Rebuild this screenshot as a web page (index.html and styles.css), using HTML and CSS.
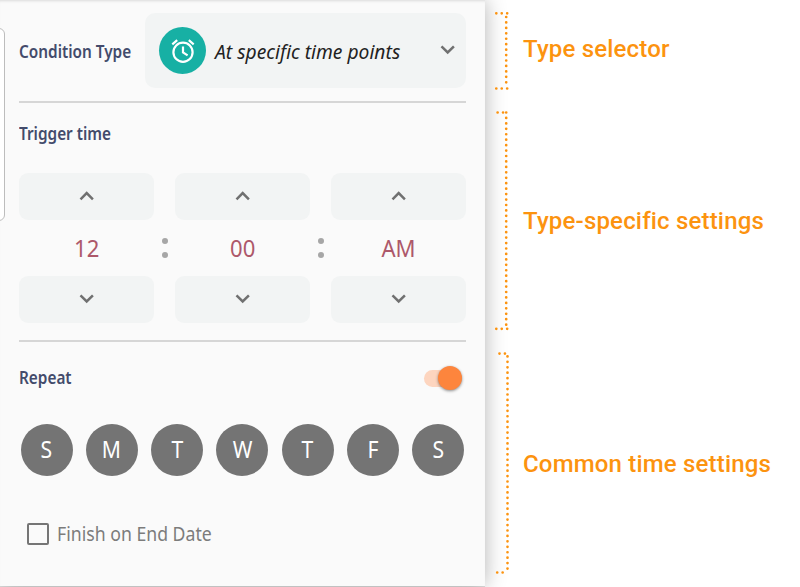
FILE: index.html
```
<!DOCTYPE html>
<html lang="en">
<head>
<meta charset="utf-8">
<title>Time condition settings</title>
<link rel="stylesheet" href="styles.css">
</head>
<body>
<svg class="defs" width="0" height="0" aria-hidden="true">
  <symbol id="up" viewBox="0 0 16 10"><path d="M1.5 8.3 7.7 2.1l6.2 6.2"/></symbol>
  <symbol id="down" viewBox="0 0 16 10"><path d="M1.5 1.3 7.7 7.5l6.2-6.2"/></symbol>
</svg>
<div class="page">
  <main class="panel">
    <div class="edge"></div>
    <section class="type-row">
      <div class="heading"><span>Condition Type</span></div>
      <div class="selector">
        <div class="alarm">
          <svg width="24" height="24" viewBox="0 0 24 24"><circle cx="12" cy="13.2" r="9.6"/><path d="M12 7.6v5.9l4.6 2.9M1.3 5.4l4.9-4.2M22.7 5.4l-4.9-4.2"/></svg>
        </div>
        <div class="choice"><span>At specific time points</span></div>
        <svg class="chevron" width="16" height="10"><use href="#down"/></svg>
      </div>
    </section>
    <section class="trigger">
      <div class="heading"><span>Trigger time</span></div>
      <div class="picker">
        <button class="step"><svg class="chevron" width="16" height="10"><use href="#up"/></svg></button>
        <i></i>
        <button class="step"><svg class="chevron" width="16" height="10"><use href="#up"/></svg></button>
        <i></i>
        <button class="step"><svg class="chevron" width="16" height="10"><use href="#up"/></svg></button>
        <div class="value"><span>12</span></div>
        <div class="colon"><b></b><b></b></div>
        <div class="value"><span>00</span></div>
        <div class="colon"><b></b><b></b></div>
        <div class="value"><span>AM</span></div>
        <button class="step"><svg class="chevron" width="16" height="10"><use href="#down"/></svg></button>
        <i></i>
        <button class="step"><svg class="chevron" width="16" height="10"><use href="#down"/></svg></button>
        <i></i>
        <button class="step"><svg class="chevron" width="16" height="10"><use href="#down"/></svg></button>
      </div>
    </section>
    <section class="repeat">
      <div class="heading"><span>Repeat</span></div>
      <div class="switch"><div class="knob"></div></div>
    </section>
    <div class="days">
      <div class="day"><span>S</span></div><div class="day"><span>M</span></div><div class="day"><span>T</span></div><div class="day"><span>W</span></div><div class="day"><span>T</span></div><div class="day"><span>F</span></div><div class="day"><span>S</span></div>
    </div>
    <div class="finish"><div class="checkbox"></div><div class="finish-label"><span>Finish on End Date</span></div></div>
  </main>
  <aside class="notes">
    <div class="note first">
      <svg width="18" height="78" viewBox="0 0 18 78"><path d="M3.3 1.3h11M13.2 5v66M3.3 76.5h11" /></svg>
      <div class="label">Type selector</div>
    </div>
    <div class="note second">
      <svg width="18" height="219" viewBox="0 0 18 219"><path d="M4.6 1.5h6M13.2 1.5v213M3.3 217.8h11"/></svg>
      <div class="label">Type-specific settings</div>
    </div>
    <div class="note third">
      <svg width="18" height="222" viewBox="0 0 18 222"><path d="M6.5 1.6h6M14.5 4.4v217M4.2 220.5h7"/></svg>
      <div class="label">Common time settings</div>
    </div>
  </aside>
</div>
</body>
</html>
```
FILE: styles.css
```
* { box-sizing: border-box; }
body { margin: 0; background: #fff; font-family: "Noto Sans", sans-serif; }
.defs { display: block; }
.page { display: flex; width: 800px; height: 587px; overflow: hidden; }
.panel {
  position: relative;
  width: 485px; height: 586px; flex: none;
  padding: 13px 19px 0;
  background: #fafafa;
  box-shadow: 0 0 20px rgba(0,0,0,.3), 0 1px 0 #e2e2e2, inset 0 3px 3px -2px rgba(0,0,0,.13);
}
.edge {
  position: absolute; left: -10px; top: 28px;
  width: 15px; height: 193px;
  border: 1px solid #bdbdbd; border-radius: 6px; background: #fff;
}
.panel span { display: inline-block; transform-origin: 0 50%; }
.heading { font-size: 17px; line-height: 24px; font-weight: 600; color: #434b6b; white-space: nowrap; }
.heading span { transform: scaleX(.902); }
.type-row { display: flex; align-items: center; height: 90px; padding-bottom: 13px; border-bottom: 2px solid #d6d6d6; }
.type-row .heading { width: 126px; padding-top: 3px; }
.selector { display: flex; align-items: center; width: 321px; height: 75px; padding: 0 10px 0 14px; border-radius: 10px; background: #f2f4f4; }
.alarm { display: flex; align-items: center; justify-content: center; width: 47px; height: 47px; border-radius: 50%; background: #17b0a4; }
.alarm svg { fill: none; stroke: #fff; stroke-width: 2.2; }
.choice { flex: 1; margin-left: 9px; padding-top: 2px; font-size: 19px; font-style: italic; color: #222; white-space: nowrap; }
.choice span { transform: scaleX(1.012); }
.chevron { fill: none; stroke: #707070; stroke-width: 2.5; display: block; }
.selector .chevron { margin-top: -1px; }
.trigger { height: 239px; padding-top: 19px; border-bottom: 2px solid #d6d6d6; }
.picker { display: grid; grid-template-columns: 135px 21px 135px 21px 135px; grid-template-rows: 47px 56px 47px; margin-top: 27px; }
.step { display: flex; align-items: center; justify-content: center; border: 0; padding: 0 0 2px; border-radius: 9px; background: #f2f4f4; }
.value { display: flex; align-items: center; justify-content: center; padding-bottom: 2px; font-size: 24px; color: #ad586a; }
.value span, .day span { transform: scaleX(.92); transform-origin: 50% 50%; }
.colon { display: flex; flex-direction: column; align-items: center; justify-content: center; gap: 8px; }
.colon b { width: 6px; height: 6px; border-radius: 50%; background: #a6a6a6; }
.repeat { display: flex; align-items: center; justify-content: space-between; height: 72px; }
.switch { width: 38px; height: 17px; margin-right: 4px; border-radius: 9px; background: #fdd5bf; }
.knob { width: 24px; height: 24px; margin: -4px 0 0 14px; border-radius: 50%; background: #fd853d; box-shadow: 0 1px 3px rgba(0,0,0,.45); }
.days { display: flex; justify-content: space-between; margin: 10px 1.5px 0; }
.day { display: flex; align-items: center; justify-content: center; width: 52px; height: 52px; padding-bottom: 2px; border-radius: 50%; background: #747474; color: #fff; font-size: 23px; }
.finish { display: flex; align-items: center; height: 30px; margin: 43px 0 0 8px; }
.checkbox { width: 22px; height: 22px; border: 2px solid #757575; border-radius: 2px; }
.finish-label { margin-left: 8px; font-size: 19px; color: #7c7c7c; white-space: nowrap; }
.finish-label span { transform: scaleX(.93); }
.notes { position: relative; padding: 12px 0 0 8px; }
.note { display: flex; align-items: center; }
.note svg { flex: none; fill: none; stroke: #fc930f; stroke-width: 2.7; stroke-linecap: round; stroke-dasharray: 0 5.44; overflow: visible; }
.label { margin-left: 12px; font: 500 24px/30px Roboto, sans-serif; letter-spacing: .18px; color: #fc930f; white-space: nowrap; }
.first .label { margin-top: -4px; }
.second { margin-top: 21px; }
.third { margin-top: 22px; }
.third .label { padding-top: 2px; }
```
